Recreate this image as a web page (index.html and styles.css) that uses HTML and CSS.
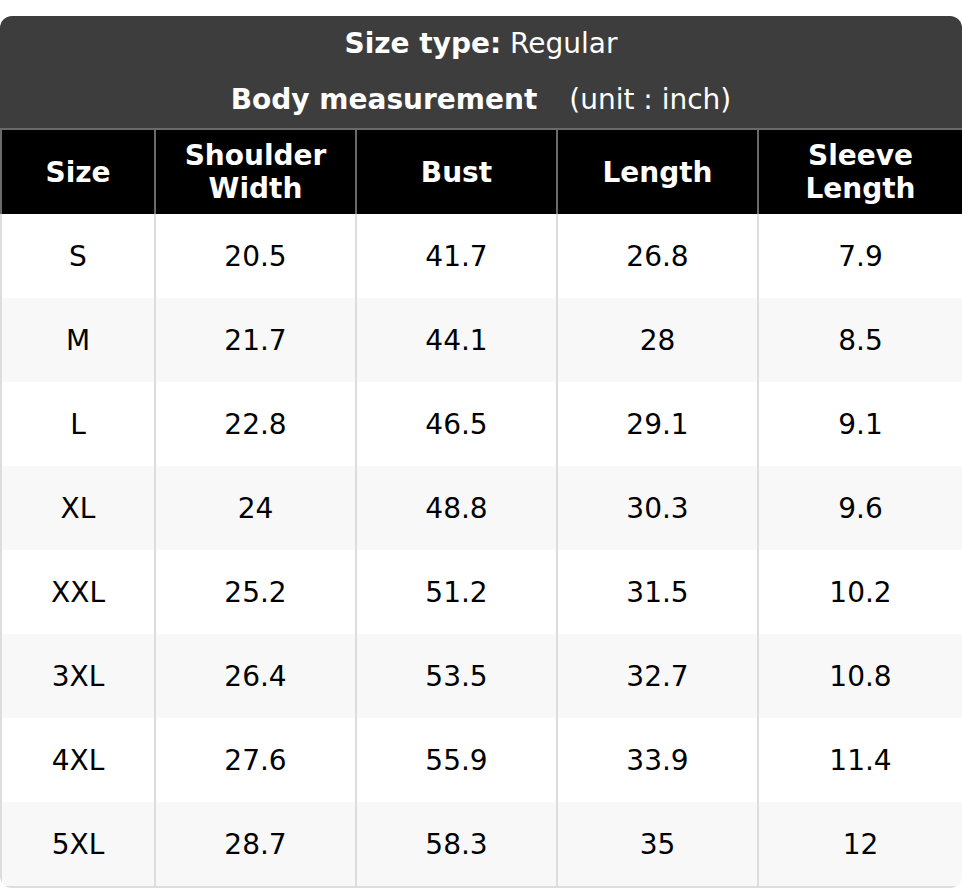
FILE: index.html
```html
<!DOCTYPE html>
<html lang="en">
<head>
<meta charset="utf-8">
<title>Size chart</title>
<link rel="stylesheet" href="styles.css">
</head>
<body>
<div class="chart">
  <div class="title">
    <div class="title-line"><b>Size type:</b> Regular</div>
    <div class="title-line"><b>Body measurement</b><span class="unit">(unit : inch)</span></div>
  </div>
  <table class="sizes">
    <colgroup>
      <col class="c-size">
      <col class="c-val">
      <col class="c-val">
      <col class="c-val">
      <col class="c-last">
    </colgroup>
    <thead>
      <tr><th>Size</th><th>Shoulder<br>Width</th><th>Bust</th><th>Length</th><th>Sleeve<br>Length</th></tr>
    </thead>
    <tbody>
      <tr><td>S</td><td>20.5</td><td>41.7</td><td>26.8</td><td>7.9</td></tr>
      <tr><td>M</td><td>21.7</td><td>44.1</td><td>28</td><td>8.5</td></tr>
      <tr><td>L</td><td>22.8</td><td>46.5</td><td>29.1</td><td>9.1</td></tr>
      <tr><td>XL</td><td>24</td><td>48.8</td><td>30.3</td><td>9.6</td></tr>
      <tr><td>XXL</td><td>25.2</td><td>51.2</td><td>31.5</td><td>10.2</td></tr>
      <tr><td>3XL</td><td>26.4</td><td>53.5</td><td>32.7</td><td>10.8</td></tr>
      <tr><td>4XL</td><td>27.6</td><td>55.9</td><td>33.9</td><td>11.4</td></tr>
      <tr><td>5XL</td><td>28.7</td><td>58.3</td><td>35</td><td>12</td></tr>
    </tbody>
  </table>
</div>
</body>
</html>
```
FILE: styles.css
```css
html, body {
  margin: 0;
  padding: 0;
  background: #ffffff;
}
body {
  padding-top: 16px;
  font-family: "DejaVu Sans", "Liberation Sans", sans-serif;
  color: #000;
}
.chart {
  width: 962px;
  border-radius: 12px;
  overflow: hidden;
}
.title {
  background: #3d3d3d;
  color: #ffffff;
  text-align: center;
  font-size: 28px;
}
.title-line {
  height: 56px;
  line-height: 56px;
}
.unit {
  margin-left: 32px;
}
.sizes {
  width: 962px;
  table-layout: fixed;
  border-collapse: collapse;
  font-size: 28px;
}
.c-size { width: 154px; }
.c-val { width: 201px; }
.c-last { width: 205px; }
.sizes th {
  background: #000;
  color: #fff;
  font-weight: bold;
  height: 84px;
  padding: 0;
  line-height: 33px;
  border: 2px solid #6a6a6a;
  border-bottom: none;
  text-align: center;
  vertical-align: middle;
}
.sizes td {
  height: 84px;
  padding: 0;
  text-align: center;
  vertical-align: middle;
  border-left: 2px solid #dddddd;
  border-right: 2px solid #dddddd;
}
.sizes tbody tr:nth-child(even) td {
  background: #f8f8f8;
}
.sizes tbody tr:last-child td {
  border-bottom: 2px solid #dddddd;
}
```
